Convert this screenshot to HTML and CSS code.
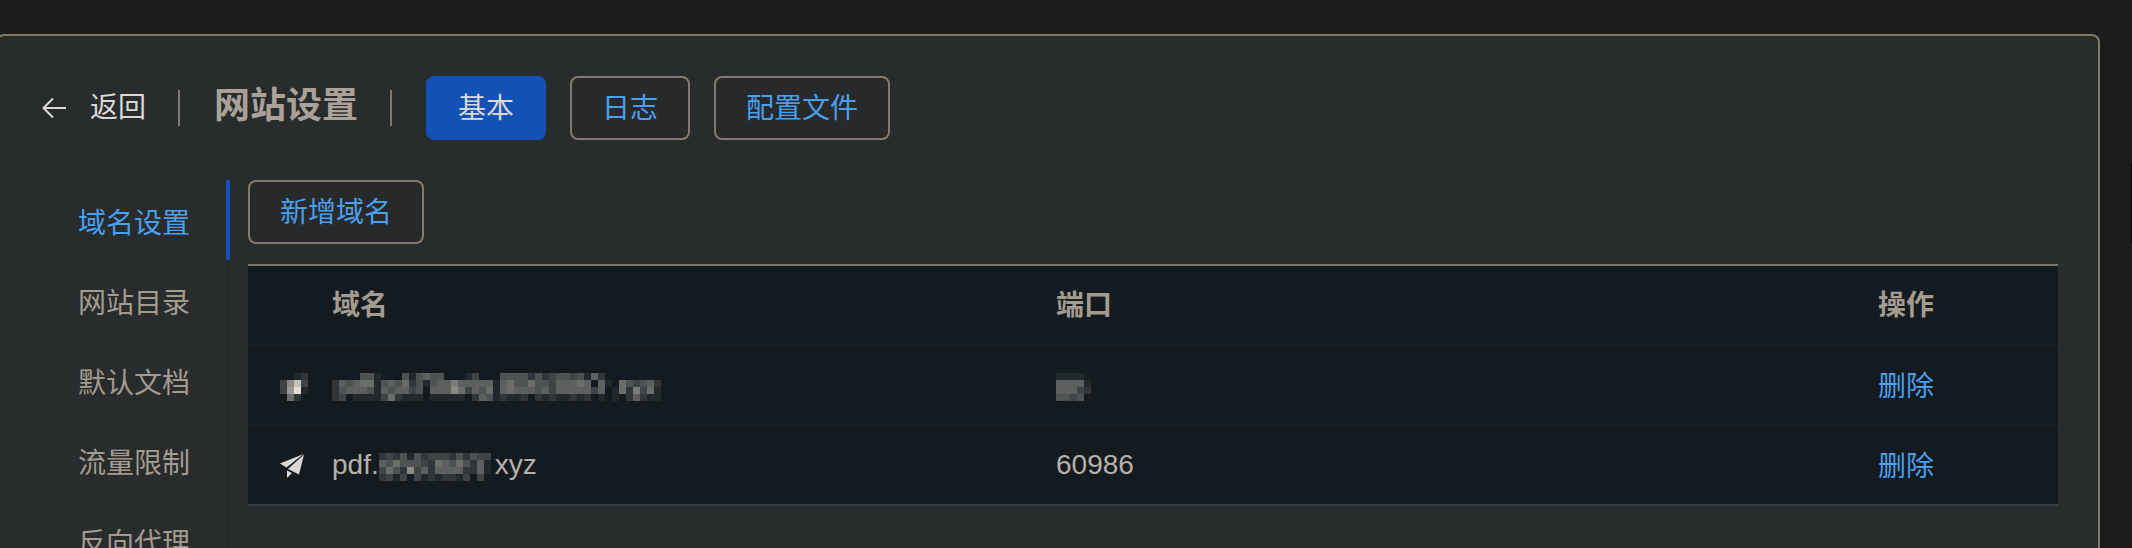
FILE: index.html
```
<!DOCTYPE html>
<html lang="zh-CN">
<head>
    <meta charset="UTF-8">
    <meta name="viewport" content="width=device-width, initial-scale=1.0">
    <title>网站设置</title>
    <link rel="stylesheet" href="styles.css">
</head>
<body>
    <main class="panel">
        <header class="panel-header">
            <button type="button" class="back">
                <svg class="back-icon" viewBox="0 0 24 24" aria-hidden="true">
                    <path d="M24 12H1.5M11 2.5L1.5 12L11 21.5"/>
                </svg>
                返回
            </button>
            <span class="divider"></span>
            <h1>网站设置</h1>
            <span class="divider"></span>
            <nav class="tabs">
                <button type="button" class="btn active">基本</button>
                <button type="button" class="btn">日志</button>
                <button type="button" class="btn">配置文件</button>
            </nav>
        </header>

        <div class="panel-body">
            <nav class="sidebar">
                <a href="#domain" class="active">域名设置</a>
                <a href="#dir">网站目录</a>
                <a href="#doc">默认文档</a>
                <a href="#limit">流量限制</a>
                <a href="#proxy">反向代理</a>
            </nav>

            <section class="content">
                <button type="button" class="btn">新增域名</button>
                <table class="domains">
                    <colgroup>
                        <col class="col-icon">
                        <col class="col-domain">
                        <col>
                        <col class="col-action">
                    </colgroup>
                    <thead>
                        <tr>
                            <th></th>
                            <th>域名</th>
                            <th>端口</th>
                            <th>操作</th>
                        </tr>
                    </thead>
                    <tbody>
                        <tr class="masked">
                            <td class="cell-icon"><svg class="mosaic" data-rows="0012 38c3 39e1 0620"></svg></td>
                            <td><svg class="mosaic" data-rows="00004410004145440001300044442423443415200000000 25456614546241455755555156446443555650510643452 24555415455340555863546156555453555553501627361 23011113621110111110254121120212112120101025211"></svg></td>
                            <td><svg class="mosaic" data-rows="11110 55551 55532 44340"></svg></td>
                            <td><a href="#delete">删除</a></td>
                        </tr>
                        <tr>
                            <td class="cell-icon">
                                <svg class="plane" viewBox="0 0 24 24" aria-hidden="true">
                                    <path d="M0 9.5L23.5 0L6.5 13.5Z"/>
                                    <path d="M24 0.5L19 20.5L8 15Z"/>
                                    <path d="M7 16.5L12 19L7 24Z"/>
                                </svg>
                            </td>
                            <td>pdf.<svg class="mosaic mosaic-inline" data-rows="2324142333242433 5464443265464251 3642835255552251 2313031212213030"></svg>xyz</td>
                            <td>60986</td>
                            <td><a href="#delete">删除</a></td>
                        </tr>
                    </tbody>
                </table>
            </section>
        </div>
    </main>
    <div class="side-handle"></div>
    <script src="mosaic.js"></script>
</body>
</html>
```
FILE: styles.css
```
* {
    box-sizing: border-box;
}
body {
    margin: 0;
    padding: 34px 32px 0 0;
    height: 100vh;
    overflow: hidden;
    background: #1b1d1c;
    color: #b8b0a8;
    font-family: "Liberation Sans", "Noto Sans CJK SC", sans-serif;
    font-size: 28px;
    line-height: 40px;
}
a {
    color: #4a9fee;
    text-decoration: none;
}
button {
    font: inherit;
    cursor: pointer;
}

.panel {
    margin-left: -4px;
    min-height: 100vh;
    padding: 40px 40px 40px 2px;
    border: 2px solid #84796d;
    border-radius: 8px;
    background: #282c2d;
}
.panel-header {
    display: flex;
    align-items: center;
    padding-left: 42px;
}
.back {
    display: flex;
    align-items: center;
    gap: 24px;
    padding: 0;
    border: 0;
    background: none;
    color: #dad9d5;
}
.back-icon {
    width: 24px;
    height: 24px;
    fill: none;
    stroke: currentColor;
    stroke-width: 2;
}
.divider {
    width: 2px;
    height: 36px;
    margin: 0 34px 0 32px;
    background: #84796d;
}
h1 {
    margin: 0;
    padding-bottom: 4px;
    color: #aaa298;
    font-size: 36px;
    font-weight: bold;
}
.tabs {
    display: flex;
    gap: 24px;
}
.btn {
    height: 64px;
    padding: 2px 30px 0;
    border: 2px solid #84796d;
    border-radius: 8px;
    background: #28292b;
    color: #4a9fee;
}
.btn.active {
    border-color: #1252b5;
    background: #1252b5;
    color: #dad9d5;
}

.panel-body {
    display: flex;
    gap: 18px;
    margin-top: 40px;
}
.sidebar {
    flex: none;
    width: 230px;
}
.sidebar a {
    display: block;
    height: 80px;
    padding: 24px 36px 0 0;
    border-right: 4px solid #28292b;
    color: #a39b8f;
    text-align: right;
}
.sidebar a.active {
    border-color: #1252b5;
    color: #4a9fee;
}
.content {
    flex: 1;
}
.domains {
    width: 100%;
    margin-top: 20px;
    border-spacing: 0;
    border-top: 2px solid #7b7468;
    table-layout: fixed;
    background: #131b21;
}
.col-icon {
    width: 84px;
}
.col-domain {
    width: 40%;
}
.col-action {
    width: 180px;
}
.domains th,
.domains td {
    height: 80px;
    padding: 0;
    border-bottom: 2px solid #1b2024;
    text-align: left;
}
.domains th {
    padding-top: 2px;
    color: #a39b8f;
}
.domains tbody tr:last-child td {
    border-bottom-color: #3b4044;
}
.domains .masked td {
    padding-top: 4px;
}
.domains td a {
    display: block;
    padding-top: 4px;
}
.domains .masked a {
    padding-top: 0;
}
.domains .cell-icon {
    padding-left: 32px;
}
.plane {
    display: block;
    width: 24px;
    height: 24px;
    margin-top: 2px;
    fill: #dad9d5;
}
.mosaic {
    display: block;
    fill: #e4ddd0;
}
.mosaic-inline {
    display: inline-block;
    margin-right: 4px;
    vertical-align: middle;
}

.side-handle {
    position: fixed;
    top: 162px;
    right: 0;
    width: 1px;
    height: 80px;
    background: #000;
}
```
FILE: mosaic.js
```
// masks private values with a grid of grey squares, one hex digit per square
var SIZE = 7;

document.querySelectorAll(".mosaic").forEach(function (svg) {
    var rows = svg.dataset.rows.split(" ");
    svg.setAttribute("width", rows[0].length * SIZE);
    svg.setAttribute("height", rows.length * SIZE);
    rows.forEach(function (row, y) {
        row.split("").forEach(function (level, x) {
            var rect = document.createElementNS("http://www.w3.org/2000/svg", "rect");
            rect.setAttribute("x", x * SIZE);
            rect.setAttribute("y", y * SIZE);
            rect.setAttribute("width", SIZE);
            rect.setAttribute("height", SIZE);
            rect.setAttribute("fill-opacity", parseInt(level, 16) / 14);
            svg.appendChild(rect);
        });
    });
});
```
